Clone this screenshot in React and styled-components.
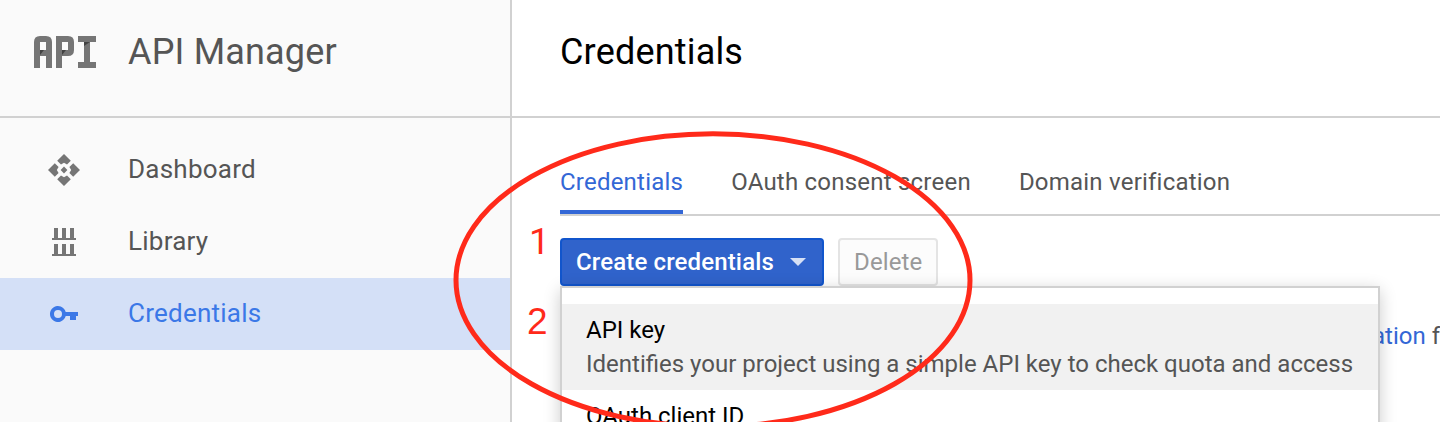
import React from "react";
import styled, { createGlobalStyle } from "styled-components";

const GlobalStyle = createGlobalStyle`
  * { box-sizing: border-box; }
  html, body { margin: 0; height: 422px; overflow: hidden; background: #fff; }
  body { font-family: Roboto, "Liberation Sans", sans-serif; color: #555; }
`;

const Page = styled.div`
  position: relative;
  display: flex;
  width: 1440px;
  height: 422px;
  overflow: hidden;
`;

const Sidebar = styled.aside`
  flex: 0 0 512px;
  background: #fafafa;
  border-right: 2px solid #d1d1d1;
`;

const SidebarHeader = styled.header`
  display: flex;
  align-items: center;
  height: 118px;
  padding: 0 0 12px 34px;
  border-bottom: 2px solid #d1d1d1;
`;

const Product = styled.div`
  margin-left: 32px;
  font-size: 36px;
  line-height: 48px;
  letter-spacing: 0.18px;
  white-space: nowrap;
`;

const Nav = styled.nav`
  padding-top: 16px;
`;

const NavItem = styled.a`
  display: flex;
  align-items: center;
  height: 72px;
  padding: 0 0 2px 44px;
  gap: 44px;
  font-size: 26px;
  letter-spacing: 0.24px;
  color: ${(p) => (p.$active ? "#3b78e7" : "#555")};
  background: ${(p) => (p.$active ? "#d4e0f7" : "transparent")};
`;

const NavIcon = styled.svg`
  flex: none;
  width: 40px;
  height: 40px;
  margin-top: 2px;
  fill: ${(p) => (p.$active ? "#3b78e7" : "#757575")};
`;

const Main = styled.main`
  flex: 1;
  min-width: 0;
`;

const MainHeader = styled.header`
  display: flex;
  align-items: center;
  height: 118px;
  padding: 0 48px 12px;
  border-bottom: 2px solid #d1d1d1;
`;

const Title = styled.h1`
  margin: 0;
  font-size: 36px;
  line-height: 48px;
  letter-spacing: 0.18px;
  font-weight: 400;
  color: #000;
`;

const Content = styled.section`
  padding: 32px 0 0 48px;
`;

const Tabs = styled.div`
  display: flex;
  gap: 48px;
  height: 66px;
  border-bottom: 2px solid #d1d1d1;
`;

const Tab = styled.a`
  height: 64px;
  font-size: 24px;
  line-height: 64px;
  letter-spacing: 0.22px;
  white-space: nowrap;
  color: ${(p) => (p.$active ? "#3367d6" : "#555")};
  box-shadow: inset 0 -4px ${(p) => (p.$active ? "#3367d6" : "transparent")};
`;

const Actions = styled.div`
  display: flex;
  gap: 14px;
  margin-top: 22px;
`;

const Button = styled.button`
  display: flex;
  align-items: center;
  height: 48px;
  padding: 0 14px;
  border-radius: 4px;
  border: 2px solid ${(p) => (p.$primary ? "#1155cc" : "#e4e4e4")};
  background: ${(p) => (p.$primary ? "#3063cb" : "#fcfcfc")};
  color: ${(p) => (p.$primary ? "#fff" : "#999")};
  font-family: inherit;
  font-size: 24px;
  letter-spacing: 0.14px;
  font-weight: ${(p) => (p.$primary ? 500 : 400)};
  white-space: nowrap;
  width: ${(p) => p.$width}px;
`;

const Caret = styled.svg`
  width: 16px;
  height: 8px;
  margin: 0 0 0 16px;
  fill: #d6e0f5;
`;

const Hint = styled.p`
  display: flex;
  justify-content: flex-end;
  margin: 34px 0 0;
  font-size: 24px;
  line-height: 32px;
  white-space: pre;
  overflow: hidden;
`;

const HintLink = styled.a`
  color: #3367d6;
`;

const Menu = styled.div`
  position: absolute;
  top: 286px;
  left: 560px;
  width: 820px;
  height: 220px;
  padding-top: 16px;
  background: #fff;
  border: 2px solid #d1d1d1;
  box-shadow: 0 4px 16px rgba(0, 0, 0, 0.2);
`;

const MenuItem = styled.div`
  height: 86px;
  padding: 9px 24px 0;
  background: ${(p) => (p.$hovered ? "#f1f1f1" : "#fff")};
  font-size: 24px;
  line-height: 34px;
  white-space: nowrap;
`;

const MenuTitle = styled.div`
  color: #000;
`;

const Annotation = styled.svg`
  position: absolute;
  inset: 0;
  width: 1440px;
  height: 422px;
  pointer-events: none;
`;

const Step = styled.span`
  position: absolute;
  left: ${(p) => p.$x}px;
  top: ${(p) => p.$y}px;
  font-family: ${(p) => p.$family || '"Liberation Sans", Arial, sans-serif'};
  font-size: 37px;
  line-height: 42px;
  color: #ff2a1a;
`;

function ApiLogo() {
  return (
    <svg width="62" height="32" viewBox="0 0 62 32" fill="none" stroke="#757575" strokeWidth="6">
      <path d="M3 32V6Q3 3 6 3H12Q15 3 15 6V32M3 17H15" />
      <path d="M25 32V3H34Q37 3 37 6V14Q37 17 34 17H25" />
      <path d="M44 3H62M44 29H62M53 3V29" />
      <g fill="#424242" stroke="none">
        <path d="M6 14H10L6 19Z" />
        <path d="M28 14H32L28 19Z" />
        <path d="M50 6H56L50 10Z" />
      </g>
    </svg>
  );
}

export default function App() {
  return (
    <>
      <GlobalStyle />
      <Page>
        <Sidebar>
          <SidebarHeader>
            <ApiLogo />
            <Product>API Manager</Product>
          </SidebarHeader>
          <Nav>
            <NavItem>
              <NavIcon viewBox="0 0 40 40">
                <path d="M20 4L26.8 10.8L23 14.6L20 12.8L17 14.6L13.2 10.8ZM36 20L29.2 26.8L25.4 23L27.2 20L25.4 17L29.2 13.2ZM20 36L13.2 29.2L17 25.4L20 27.2L23 25.4L26.8 29.2ZM4 20L10.8 13.2L14.6 17L12.8 20L14.6 23L10.8 26.8ZM20 16.6L23.4 20L20 23.4L16.6 20Z" />
              </NavIcon>
              Dashboard
            </NavItem>
            <NavItem>
              <NavIcon viewBox="0 0 40 40">
                <path d="M10 6H14V16H18V6H22V16H26V6H30V16H32V18H8V16H10ZM10 22H14V32H18V22H22V32H26V22H30V32H32V34H8V32H10Z" />
              </NavIcon>
              Library
            </NavItem>
            <NavItem $active>
              <NavIcon $active viewBox="0 0 40 40">
                <path fillRule="evenodd" d="M21.7 18A8 8 0 1 0 21.7 22H26V26H32V22H34V18ZM14 16A4 4 0 1 1 14 24A4 4 0 1 1 14 16Z" />
              </NavIcon>
              Credentials
            </NavItem>
          </Nav>
        </Sidebar>
        <Main>
          <MainHeader>
            <Title>Credentials</Title>
          </MainHeader>
          <Content>
            <Tabs>
              <Tab $active>Credentials</Tab>
              <Tab>OAuth consent screen</Tab>
              <Tab>Domain verification</Tab>
            </Tabs>
            <Actions>
              <Button $primary $width={264}>
                Create credentials
                <Caret viewBox="0 0 16 8">
                  <path d="M0 0H16L8 8Z" />
                </Caret>
              </Button>
              <Button $width={100}>Delete</Button>
            </Actions>
            <Hint>
              <HintLink>ation</HintLink> f
            </Hint>
          </Content>
        </Main>
        <Menu>
          <MenuItem $hovered>
            <MenuTitle>API key</MenuTitle>
            Identifies your project using a simple API key to check quota and access
          </MenuItem>
          <MenuItem>
            <MenuTitle>OAuth client ID</MenuTitle>
          </MenuItem>
        </Menu>
        <Step $x={529} $y={221} $family="Roboto, sans-serif">1</Step>
        <Step $x={527} $y={301}>2</Step>
        <Annotation viewBox="0 0 1440 422">
          <ellipse cx="713" cy="280.2" rx="257" ry="146.4" fill="none" stroke="#ff2a1a" strokeWidth="5" />
        </Annotation>
      </Page>
    </>
  );
}
